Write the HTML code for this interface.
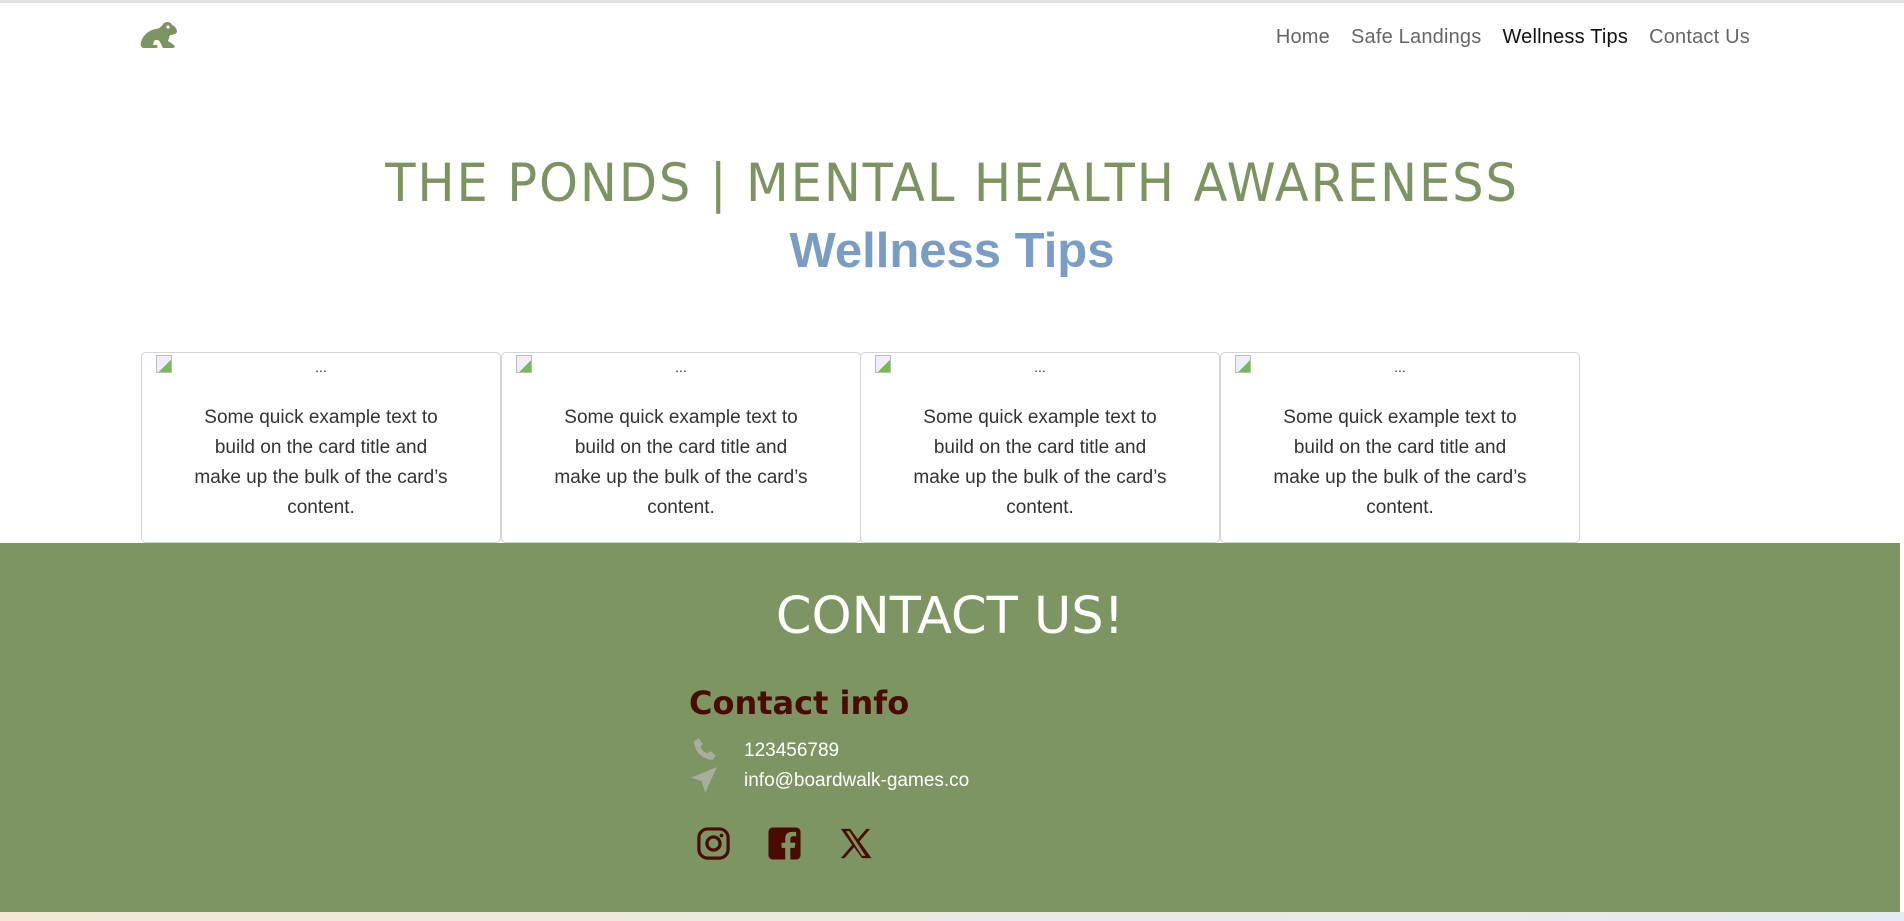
<!DOCTYPE html>
<html><head><meta charset="utf-8"><style>
*{margin:0;padding:0;box-sizing:border-box}
body{width:1904px;height:921px;overflow:hidden;background:#fff;font-family:"Liberation Sans",sans-serif;position:relative}
.top{position:absolute;left:0;top:0;width:1904px;height:3px;background:#e2e2e2}
.nav{position:absolute;top:26px;right:154px;font-size:20px;color:#666;display:flex;gap:21px;letter-spacing:.2px}
.nav .a{color:#111}
h1{position:absolute;top:153px;left:0;width:1904px;text-align:center;font-family:"Comic Sans MS","DejaVu Sans",sans-serif;font-weight:normal;font-size:53px;color:#7d9462;letter-spacing:2px;transform:scaleX(.935)}
h2{position:absolute;top:223px;left:0;width:1904px;text-align:center;font-size:49px;color:#7a9ec3;font-weight:bold}
.card{position:absolute;top:352px;width:360px;height:191px;border:1px solid #d4d4d4;border-radius:5px;text-align:center;color:#333;font-size:19px}
.card .dots{position:absolute;top:6px;left:0;width:100%;font-size:14px}
.card .img{position:absolute;left:14px;top:2px;width:16px;height:18px;border:1px solid #bbb;background:linear-gradient(135deg,#eef 60%,#7b5 60%)}
.card p{position:absolute;top:50px;left:51px;right:51px;line-height:30px}
.green{position:absolute;left:0;top:543px;width:1900px;height:369px;background:#7d9562}
.strip{position:absolute;left:0;top:912px;width:1904px;height:9px;background:linear-gradient(90deg,#f5e6d8,#e4ebf2)}
.cu{position:absolute;top:44px;left:0;width:1900px;text-align:center;font-family:"Comic Sans MS","DejaVu Sans",sans-serif;color:#fff;font-size:51px}
.ci{position:absolute;left:689px;top:141px;font-family:"Comic Sans MS","DejaVu Sans",sans-serif;color:#4a0c02;font-size:32px;font-weight:bold}
.row{position:absolute;left:744px;color:#fff;font-size:19px}
.soc{position:absolute;top:283px;display:block}
</style></head><body>
<div class="top"></div>
<svg style="position:absolute;left:140px;top:21px" width="38" height="31" viewBox="0 0 38 31"><path d="M24 2c3-2 7-1 8 2 3 1 5 4 5 7-1 2-4 3-7 3l-2 6 6 4c1 1 1 3-1 3l-10 0-3-6c-1-2-4-3-6-1l-1 4 4 0c1 1 1 3-1 3H4c-3 0-4-3-3-6 2-7 8-12 15-13 3 0 5-2 8-6z" fill="#7d9462"/><circle cx="28" cy="6" r="1.6" fill="#fff"/></svg>
<div class="nav"><span>Home</span><span>Safe Landings</span><span class="a">Wellness Tips</span><span>Contact Us</span></div>
<h1>THE PONDS | MENTAL HEALTH AWARENESS</h1>
<h2>Wellness Tips</h2>
<div class="card" style="left:141px"><div class="img"></div><div class="dots">...</div><p>Some quick example text to build on the card title and make up the bulk of the card’s content.</p></div>
<div class="card" style="left:501px"><div class="img"></div><div class="dots">...</div><p>Some quick example text to build on the card title and make up the bulk of the card’s content.</p></div>
<div class="card" style="left:860px"><div class="img"></div><div class="dots">...</div><p>Some quick example text to build on the card title and make up the bulk of the card’s content.</p></div>
<div class="card" style="left:1220px"><div class="img"></div><div class="dots">...</div><p>Some quick example text to build on the card title and make up the bulk of the card’s content.</p></div>
<div class="green">
<div class="cu">CONTACT US!</div>
<div class="ci">Contact info</div>
<svg style="position:absolute;left:692px;top:193px" width="26" height="26" viewBox="0 0 24 24"><path d="M6 2l4 5-2 3c1 3 3 5 6 6l3-2 5 4-3 4C10 22 2 14 2 5z" fill="#a9ad9e"/></svg>
<div class="row" style="top:197px">123456789</div>
<svg style="position:absolute;left:690px;top:223px" width="28" height="28" viewBox="0 0 24 24"><path d="M23 1L1 10l9 3 3 10z" fill="#a9ad9e"/></svg>
<div class="row" style="top:227px">info@boardwalk-games.co</div>
<svg class="soc" style="left:696px" width="35" height="35" viewBox="0 0 24 24"><rect x="2" y="2" width="20" height="20" rx="6" fill="none" stroke="#4a0c02" stroke-width="2.2"/><circle cx="12" cy="12" r="4.5" fill="none" stroke="#4a0c02" stroke-width="2.2"/><circle cx="17.5" cy="6.5" r="1.3" fill="#4a0c02"/></svg>
<svg class="soc" style="left:767px" width="35" height="35" viewBox="0 0 24 24"><path d="M4 1h16a3 3 0 0 1 3 3v16a3 3 0 0 1-3 3h-4v-8h3l.5-3.5H16V9c0-1 .5-2 2-2h2V4h-3c-3 0-4.5 2-4.5 4.5v3H10V15h2.5v8H4a3 3 0 0 1-3-3V4a3 3 0 0 1 3-3z" fill="#4a0c02"/></svg>
<svg class="soc" style="left:838px" width="35" height="35" viewBox="0 0 24 24"><path d="M2 2h6.5l5 7 6-7h2.5l-7.3 8.5L23 22h-6.5l-5.5-7.5L4.5 22H2l7.7-9z" fill="#4a0c02"/><path d="M5.5 3.5h2.3l11 17h-2.3z" fill="#7d9562"/></svg>
</div>
<div class="strip"></div>
</body></html>
